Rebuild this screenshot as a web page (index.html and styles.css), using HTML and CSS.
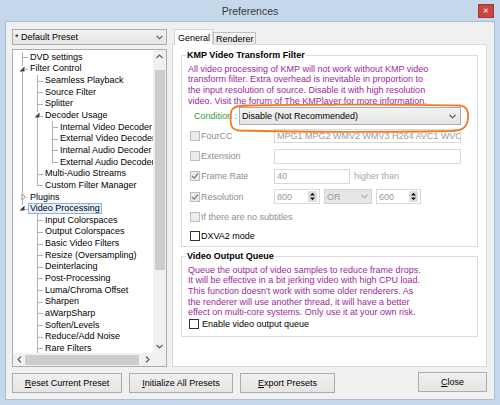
FILE: index.html
```html
<!DOCTYPE html>
<html>
<head>
<meta charset="utf-8">
<title>Preferences</title>
<link rel="stylesheet" href="styles.css">
</head>
<body>
<div class="window">
  <div class="titlebar">
    <div class="title">Preferences</div>
    <div class="close">&#x2715;</div>
  </div>
  <div class="client">
    <div class="left">
      <div class="preset">
        <span>* Default Preset</span>
        <svg class="chev" width="7" height="5" viewBox="0 0 7 5"><polyline points="0.5,0.8 3.5,3.8 6.5,0.8" fill="none" stroke="#555" stroke-width="1.1"/></svg>
      </div>
      <div class="tree">
        <div class="rows">
          <div class="row"><i class="g t"></i><span class="lbl">DVD settings</span></div>
          <div class="row"><i class="g t"><svg class="exp-open" width="6" height="6" viewBox="0 0 6 6"><path d="M5.5 0.5 L5.5 5.5 L0.5 5.5 Z" fill="#3c3c3c"/></svg></i><span class="lbl">Filter Control</span></div>
          <div class="row"><i class="g v"></i><i class="g t"></i><span class="lbl">Seamless Playback</span></div>
          <div class="row"><i class="g v"></i><i class="g t"></i><span class="lbl">Source Filter</span></div>
          <div class="row"><i class="g v"></i><i class="g t"></i><span class="lbl">Splitter</span></div>
          <div class="row"><i class="g v"></i><i class="g t"><svg class="exp-open" width="6" height="6" viewBox="0 0 6 6"><path d="M5.5 0.5 L5.5 5.5 L0.5 5.5 Z" fill="#3c3c3c"/></svg></i><span class="lbl">Decoder Usage</span></div>
          <div class="row"><i class="g v"></i><i class="g v"></i><i class="g t"></i><span class="lbl">Internal Video Decoder</span></div>
          <div class="row"><i class="g v"></i><i class="g v"></i><i class="g t"></i><span class="lbl">External Video Decoder</span></div>
          <div class="row"><i class="g v"></i><i class="g v"></i><i class="g t"></i><span class="lbl">Internal Audio Decoder</span></div>
          <div class="row"><i class="g v"></i><i class="g v"></i><i class="g l"></i><span class="lbl">External Audio Decoder</span></div>
          <div class="row"><i class="g v"></i><i class="g t"></i><span class="lbl">Multi-Audio Streams</span></div>
          <div class="row"><i class="g v"></i><i class="g l"></i><span class="lbl">Custom Filter Manager</span></div>
          <div class="row"><i class="g t"><svg class="exp-closed" width="6" height="8" viewBox="0 0 6 8"><path d="M1 0.8 L4.6 4 L1 7.2 Z" fill="#fff" stroke="#8c8c8c" stroke-width="1"/></svg></i><span class="lbl">Plugins</span></div>
          <div class="row"><i class="g l"><svg class="exp-open" width="6" height="6" viewBox="0 0 6 6"><path d="M5.5 0.5 L5.5 5.5 L0.5 5.5 Z" fill="#3c3c3c"/></svg></i><span class="lbl sel">Video Processing</span></div>
          <div class="row"><i class="g"></i><i class="g t"></i><span class="lbl">Input Colorspaces</span></div>
          <div class="row"><i class="g"></i><i class="g t"></i><span class="lbl">Output Colorspaces</span></div>
          <div class="row"><i class="g"></i><i class="g t"></i><span class="lbl">Basic Video Filters</span></div>
          <div class="row"><i class="g"></i><i class="g t"></i><span class="lbl">Resize (Oversampling)</span></div>
          <div class="row"><i class="g"></i><i class="g t"></i><span class="lbl">Deinterlacing</span></div>
          <div class="row"><i class="g"></i><i class="g t"></i><span class="lbl">Post-Processing</span></div>
          <div class="row"><i class="g"></i><i class="g t"></i><span class="lbl">Luma/Chroma Offset</span></div>
          <div class="row"><i class="g"></i><i class="g t"></i><span class="lbl">Sharpen</span></div>
          <div class="row"><i class="g"></i><i class="g t"></i><span class="lbl">aWarpSharp</span></div>
          <div class="row"><i class="g"></i><i class="g t"></i><span class="lbl">Soften/Levels</span></div>
          <div class="row"><i class="g"></i><i class="g t"></i><span class="lbl">Reduce/Add Noise</span></div>
          <div class="row"><i class="g"></i><i class="g t"></i><span class="lbl">Rare Filters</span></div>
        </div>
        <div class="vscroll">
          <div class="arrow"><svg width="7" height="5" viewBox="0 0 7 5"><polyline points="0.5,4 3.5,1 6.5,4" fill="none" stroke="#606060" stroke-width="1.2"/></svg></div>
          <div class="vtrack"><div class="vthumb"></div></div>
          <div class="arrow"><svg width="7" height="5" viewBox="0 0 7 5"><polyline points="0.5,1 3.5,4 6.5,1" fill="none" stroke="#606060" stroke-width="1.2"/></svg></div>
        </div>
        <div class="hscroll">
          <div class="harrow"><svg width="5" height="7" viewBox="0 0 5 7"><polyline points="4,0.5 1,3.5 4,6.5" fill="none" stroke="#606060" stroke-width="1.2"/></svg></div>
          <div class="htrack"><div class="hthumb"></div></div>
          <div class="harrow"><svg width="5" height="7" viewBox="0 0 5 7"><polyline points="1,0.5 4,3.5 1,6.5" fill="none" stroke="#606060" stroke-width="1.2"/></svg></div>
        </div>
        <div class="corner"></div>
      </div>
    </div>

    <div class="right">
      <div class="tabs">
        <div class="tab active">General</div>
        <div class="tab other">Renderer</div>
      </div>
      <div class="panel">
        <fieldset class="group g1">
          <legend class="gtitle">KMP Video Transform Filter</legend>
          <div class="desc d1">All video processing of KMP will not work without KMP video<br>transform filter. Extra overhead is inevitable in proportion to<br>the input resolution of source. Disable it with high resolution<br>video. Visit the forum of The KMPlayer for more information.</div>
          <div class="cond-row">
            <span class="cond-label">Condition :</span>
            <div class="combo">
              <span>Disable (Not Recommended)</span>
              <svg class="chev" width="7" height="5" viewBox="0 0 7 5"><polyline points="0.5,0.8 3.5,3.8 6.5,0.8" fill="none" stroke="#444" stroke-width="1.1"/></svg>
              <svg class="ring" width="244" height="32" viewBox="0 0 244 32"><path d="M14 2.5 C80 1,190 1.5,230 2.5 C238 3,239.5 8,239 15 C238.5 24,234 27.5,222 28 C160 29,60 29,10 27.5 C2.5 27,1.5 22,1.5 15 C1.5 7,3 3.5,12 3 C30 2.2,50 2,70 2.2" fill="none" stroke="#f47b22" stroke-width="1.8" stroke-linecap="round"/></svg>
            </div>
          </div>
          <div class="opt-row r20">
            <span class="opt"><span class="cb dis"></span>FourCC</span>
            <div class="field w187 h14">MPG1 MPG2 WMV2 WMV3 H264 AVC1 WVC1</div>
          </div>
          <div class="opt-row r20">
            <span class="opt"><span class="cb dis"></span>Extension</span>
            <div class="field w187 h15"></div>
          </div>
          <div class="opt-row r20">
            <span class="opt"><span class="cb dis"><svg width="8" height="8" viewBox="0 0 8 8"><polyline points="1,4 3.2,6.2 7,1.5" fill="none" stroke="#7a7a7a" stroke-width="1.2"/></svg></span>Frame Rate</span>
            <div class="field w76 h15">40</div>
            <span class="hint">higher than</span>
          </div>
          <div class="opt-row r21">
            <span class="opt"><span class="cb dis"><svg width="8" height="8" viewBox="0 0 8 8"><polyline points="1,4 3.2,6.2 7,1.5" fill="none" stroke="#7a7a7a" stroke-width="1.2"/></svg></span>Resolution</span>
            <div class="field w46 h15 spinf"><span>800</span><span class="spin"><svg width="9" height="11" viewBox="0 0 9 11"><path d="M2 4.5 L4.5 1.8 L7 4.5 Z M2 6.5 L4.5 9.2 L7 6.5 Z" fill="#111"/></svg></span></div>
            <div class="ddis">OR<svg class="chev" width="7" height="5" viewBox="0 0 7 5"><polyline points="0.5,0.8 3.5,3.8 6.5,0.8" fill="none" stroke="#a8a8a8" stroke-width="1.1"/></svg></div>
            <div class="field w45 h15 spinf"><span>600</span><span class="spin"><svg width="9" height="11" viewBox="0 0 9 11"><path d="M2 4.5 L4.5 1.8 L7 4.5 Z M2 6.5 L4.5 9.2 L7 6.5 Z" fill="#111"/></svg></span></div>
          </div>
          <div class="opt-row r19">
            <span class="opt wide"><span class="cb dis"></span>If there are no subtitles</span>
          </div>
          <div class="opt-row r19">
            <span class="opt wide on"><span class="cb"></span>DXVA2 mode</span>
          </div>
        </fieldset>

        <fieldset class="group g2">
          <legend class="gtitle">Video Output Queue</legend>
          <div class="desc d2">Queue the output of video samples to reduce frame drops.<br>It will be effective in a bit jerking video with high CPU load.<br>This function doesn't work with some older renderers. As<br>the renderer will use another thread, it will have a better<br>effect on multi-core systems. Only use it at your own risk.</div>
          <div class="en-row"><span class="cb"></span><span>Enable video output queue</span></div>
        </fieldset>
      </div>
    </div>

    <div class="buttons">
      <button class="btn b-reset"><u>R</u>eset Current Preset</button>
      <button class="btn b-init"><u>I</u>nitialize All Presets</button>
      <button class="btn b-export"><u>E</u>xport Presets</button>
      <button class="btn b-close"><u>C</u>lose</button>
    </div>
  </div>
</div>
</body>
</html>
```

FILE: styles.css
```css
html, body {
  margin: 0;
  padding: 0;
}
body {
  font-family: "Liberation Sans", Arial, sans-serif;
  font-size: 9px;
  color: #000;
  background: #c4d7eb;
}
.window {
  width: 500px;
  height: 405px;
  background: #c4d7eb;
  display: flex;
  flex-direction: column;
  overflow: hidden;
}
.titlebar {
  height: 21px;
  flex: none;
  display: grid;
  grid-template-columns: 1fr auto 1fr;
  align-items: center;
}
.title {
  grid-column: 2;
  font-size: 10.5px;
  color: #3a3a3a;
}
.close {
  grid-column: 3;
  justify-self: end;
  margin-right: 6px;
  width: 16px;
  height: 14px;
  box-sizing: border-box;
  background: #c9463f;
  border: 1px solid #a8362f;
  color: #fff;
  font-size: 7px;
  display: flex;
  align-items: center;
  justify-content: center;
  line-height: 1;
}
.client {
  flex: 1;
  margin: 0 5px 5px;
  border: 1px solid #a9bfd6;
  background: #f0f0f0;
  display: grid;
  grid-template-columns: 155px 315px;
  grid-template-rows: 338px 21px;
  column-gap: 5px;
  row-gap: 5px;
  padding: 7px 7px 6px 6px;
  min-height: 0;
}

/* left column */
.left {
  display: flex;
  flex-direction: column;
  gap: 4px;
  min-height: 0;
}
.preset {
  height: 16px;
  flex: none;
  box-sizing: border-box;
  border: 1px solid #acacac;
  background: linear-gradient(#f2f2f2, #e5e5e5);
  display: flex;
  align-items: center;
  padding: 0 3px 0 2px;
}
.chev {
  margin-left: auto;
  flex: none;
}
.tree {
  flex: 1;
  min-height: 0;
  border: 1px solid #abadb3;
  background: #fff;
  display: grid;
  grid-template-columns: 1fr 13px;
  grid-template-rows: 1fr 13px;
}
.rows {
  overflow: hidden;
  padding: 1.5px 0 0 2px;
  min-width: 0;
}
.row {
  height: 11.65px;
  display: flex;
  white-space: nowrap;
}
.g {
  width: 15px;
  flex: none;
  position: relative;
}
.g.v::before,
.g.t::before,
.g.l::before {
  content: "";
  position: absolute;
  left: 7px;
  top: 0;
  bottom: 0;
  border-left: 1px solid #b0b0b0;
}
.g.l::before {
  bottom: 50%;
}
.g.t::after,
.g.l::after {
  content: "";
  position: absolute;
  left: 7px;
  top: 50%;
  width: 6px;
  border-top: 1px solid #b0b0b0;
}
.exp-open {
  position: absolute;
  left: 4px;
  top: 2.5px;
  z-index: 1;
  background: #fff;
}
.exp-closed {
  position: absolute;
  left: 6px;
  top: 2px;
  z-index: 1;
  background: #fff;
}
.lbl {
  align-self: center;
  line-height: 9px;
  border: 1px solid transparent;
  padding: 0 1px;
  margin-left: -2px;
}
.lbl.sel {
  border-color: #86b4e6;
  background: #e7f2fd;
}
.vscroll {
  grid-column: 2;
  grid-row: 1;
  background: #f0f0f0;
  display: flex;
  flex-direction: column;
  min-height: 0;
}
.arrow {
  height: 13px;
  flex: none;
  display: flex;
  align-items: center;
  justify-content: center;
}
.vtrack {
  flex: 1;
  padding-top: 7px;
}
.vthumb {
  height: 200px;
  margin: 0 1px 0 2px;
  background: #cdcdcd;
}
.hscroll {
  grid-column: 1;
  grid-row: 2;
  background: #f0f0f0;
  display: flex;
}
.harrow {
  width: 12px;
  flex: none;
  display: flex;
  align-items: center;
  justify-content: center;
}
.htrack {
  flex: 1;
  padding: 2px 1px 1px 0;
}
.hthumb {
  height: 10px;
  background: #cdcdcd;
  width: 114px;
}
.corner {
  grid-column: 2;
  grid-row: 2;
  background: #f0f0f0;
}

/* right column */
.right {
  display: flex;
  flex-direction: column;
  min-height: 0;
}
.tabs {
  height: 15px;
  flex: none;
  display: flex;
  align-items: flex-end;
  padding-left: 2px;
}
.tab {
  box-sizing: border-box;
  border: 1px solid #c8c8c8;
  border-bottom: 0;
  display: flex;
  align-items: center;
  white-space: nowrap;
}
.tab.active {
  width: 39px;
  height: 16px;
  margin-bottom: -1px;
  padding: 0 3px;
  background: #fff;
  border-color: #d4d4d4;
  position: relative;
  z-index: 1;
}
.tab.other {
  width: 43px;
  height: 12px;
  padding: 1px 2px 0;
  background: linear-gradient(#f3f3f3, #e8e8e8);
  border-color: #c0c0c0;
}
.panel {
  flex: 1;
  border: 1px solid #d9d9d9;
  background: #fff;
  padding: 4.5px 8px 0 8px;
  min-height: 0;
}
.group {
  margin: 0;
  padding: 0;
  border: 1px solid #dcdcdc;
  min-width: 0;
}
.gtitle {
  font-weight: bold;
  padding: 0 1px;
  margin-left: 4px;
  line-height: 11px;
}
.g1 {
  padding-bottom: 1px;
}
.g2 {
  margin-top: 4px;
  padding-bottom: 5px;
}
.desc {
  color: #a0269e;
  padding-left: 6px;
  white-space: nowrap;
}
.d1 {
  line-height: 10.7px;
  padding-top: 3px;
}
.d2 {
  line-height: 10.6px;
  padding-top: 2.5px;
}
.cond-row {
  height: 20px;
  display: flex;
  align-items: center;
  padding-left: 12px;
}
.cond-label {
  color: #36a036;
  width: 45px;
  flex: none;
}
.combo {
  width: 222px;
  height: 18px;
  box-sizing: border-box;
  border: 1px solid #acacac;
  background: linear-gradient(#f2f2f2, #e5e5e5);
  display: flex;
  align-items: center;
  padding: 0 4px 0 2px;
  position: relative;
}
.ring {
  position: absolute;
  left: -11px;
  top: -5px;
  pointer-events: none;
  overflow: visible;
}
.opt-row {
  display: flex;
  align-items: center;
  padding-left: 8px;
}
.r19 { height: 19px; }
.r20 { height: 20px; }
.r21 { height: 21px; }
.opt {
  width: 84px;
  flex: none;
  display: flex;
  align-items: center;
  gap: 1px;
  color: #8e8e8e;
  white-space: nowrap;
}
.opt.wide {
  width: auto;
}
.opt.on {
  color: #000;
}
.cb {
  width: 10px;
  height: 10px;
  box-sizing: border-box;
  border: 1px solid #333;
  background: #fff;
  flex: none;
  display: flex;
  align-items: center;
  justify-content: center;
}
.cb.dis {
  border-color: #bdbdbd;
  background: #ececec;
}
.field {
  box-sizing: border-box;
  border: 1px solid #d9d9d9;
  background: #fff;
  color: #9a9a9a;
  padding-left: 2px;
  display: flex;
  align-items: center;
  overflow: hidden;
  white-space: nowrap;
  flex: none;
}
.w187 { width: 187px; }
.w76 { width: 76px; }
.w46 { width: 46px; }
.w45 { width: 45px; }
.h14 { height: 14px; }
.h15 { height: 15px; }
.hint {
  color: #a8a8a8;
  margin-left: 4px;
}
.spinf .spin {
  margin-left: auto;
  margin-right: 2px;
  width: 9px;
  height: 11px;
  box-sizing: border-box;
  background: #dedede;
  border-radius: 1px;
  display: flex;
}
.ddis {
  width: 48px;
  height: 15px;
  box-sizing: border-box;
  margin: 0 4px;
  border: 1px solid #d4d4d4;
  background: #e6e6e6;
  color: #9a9a9a;
  display: flex;
  align-items: center;
  padding: 0 3px 0 2px;
  flex: none;
}
.en-row {
  height: 13px;
  display: flex;
  align-items: center;
  gap: 3px;
  padding-left: 7px;
}

/* buttons */
.buttons {
  grid-column: 1 / -1;
  display: flex;
  align-items: flex-start;
  gap: 7px;
}
.btn {
  height: 20px;
  box-sizing: border-box;
  border: 1px solid #acacac;
  background: linear-gradient(#f0f0f0, #e5e5e5);
  margin: 1px 0 0;
  padding: 0;
  font-family: inherit;
  font-size: 9px;
  color: #000;
  display: flex;
  align-items: center;
  justify-content: center;
  flex: none;
}
.b-reset { width: 110px; }
.b-init { width: 104px; }
.b-export { width: 95px; }
.b-close {
  width: 69px;
  margin-left: auto;
  margin-top: 0;
}
```
